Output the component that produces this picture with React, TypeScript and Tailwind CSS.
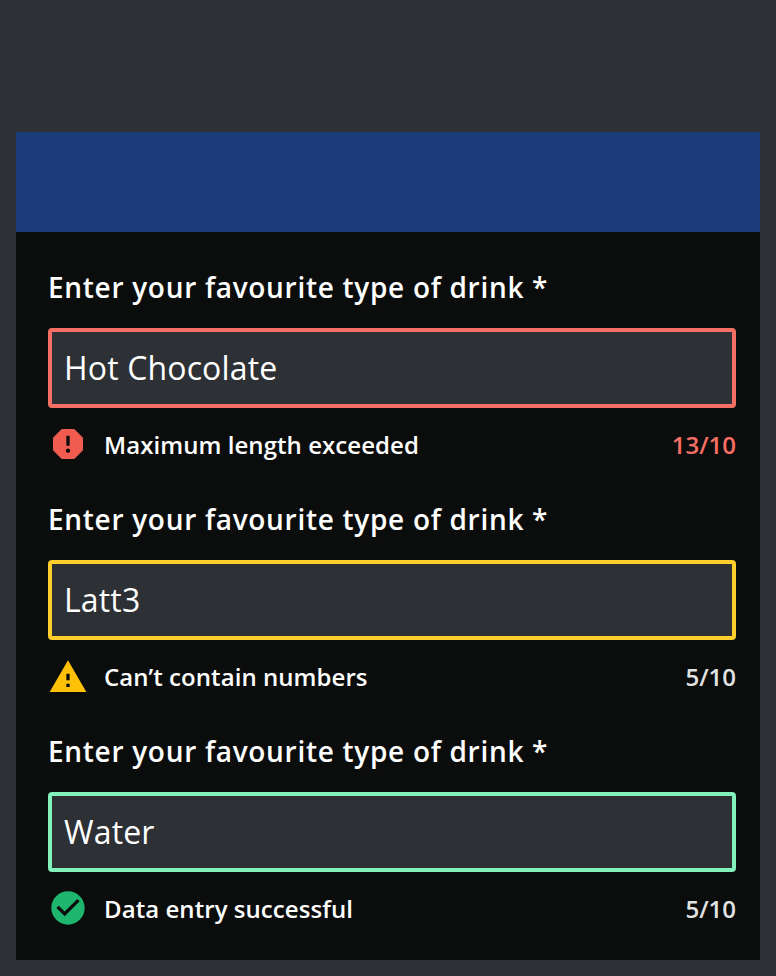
import React from "react";

type Kind = "error" | "warning" | "success";

function StatusIcon({ kind }: { kind: Kind }) {
  if (kind === "error")
    return (
      <svg viewBox="0 0 24 24" className="size-10" fill="#f25c50">
        <path d="M15.73 3H8.27L3 8.27v7.46L8.27 21h7.46L21 15.73V8.27L15.73 3zM12 17.3c-.72 0-1.3-.58-1.3-1.3s.58-1.3 1.3-1.3 1.3.58 1.3 1.3-.58 1.3-1.3 1.3zm1-4.3h-2V7h2v6z" />
      </svg>
    );
  if (kind === "warning")
    return (
      <svg viewBox="0 0 24 24" className="mt-0.5 size-10" fill="#ffc107">
        <path d="M1 21h22L12 2 1 21zm12-3h-2v-2h2v2zm0-4h-2v-4h2v4z" />
      </svg>
    );
  return (
    <svg viewBox="0 0 24 24" className="size-10" fill="#1eb56f">
      <path d="M12 2C6.48 2 2 6.48 2 12s4.48 10 10 10 10-4.48 10-10S17.52 2 12 2zm-2 15l-5-5 1.41-1.41L10 14.17l7.59-7.59L19 8l-9 9z" />
    </svg>
  );
}

const fields: { kind: Kind; value: string; message: string; count: string; border: string; countColor: string }[] = [
  { kind: "error", value: "Hot Chocolate", message: "Maximum length exceeded", count: "13/10", border: "border-[#f86f65]", countColor: "text-[#f86f65]" },
  { kind: "warning", value: "Latt3", message: "Can’t contain numbers", count: "5/10", border: "border-[#ffd02c]", countColor: "text-[#e2e3e3]" },
  { kind: "success", value: "Water", message: "Data entry successful", count: "5/10", border: "border-[#80f2ba]", countColor: "text-[#e2e3e3]" },
];

export default function App() {
  return (
    <main className="h-[976px] w-[776px] bg-[#2d3034] px-4 pt-[132px] font-['Open_Sans',sans-serif] text-white antialiased">
      <div className="h-[100px] bg-[#1c3b79]" />
      <div className="h-[728px] bg-[#0b0d0c] pr-6 pl-8 pt-8">
        {fields.map((f) => (
          <section key={f.kind} className="h-[232px]">
            <label className="block h-16 text-[28px] leading-[46px] font-semibold tracking-[0.7px] whitespace-nowrap">
              Enter your favourite type of drink *
            </label>
            <div className={`flex h-20 items-center rounded-[4px] border-4 bg-[#2d3034] px-3 text-[32px] tracking-[0.15px] ${f.border}`}>
              {f.value}
            </div>
            <div className="mt-4 flex h-10 items-center text-[24px] font-semibold">
              <StatusIcon kind={f.kind} />
              <span className="mt-0.5 ml-4 grow tracking-[0.06px]">{f.message}</span>
              <span className={`mt-0.5 ${f.countColor}`}>{f.count}</span>
            </div>
          </section>
        ))}
      </div>
    </main>
  );
}
